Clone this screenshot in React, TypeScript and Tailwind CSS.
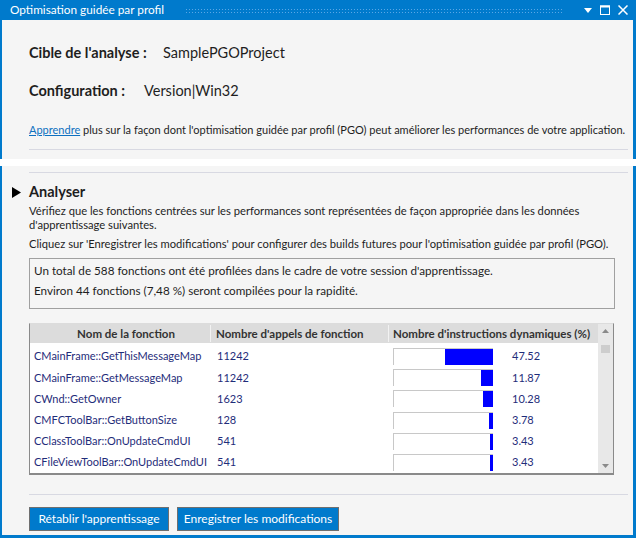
import React from "react";

type Row = { name: string; calls: string; pct: number };

const ROWS: Row[] = [
  { name: "CMainFrame::GetThisMessageMap", calls: "11242", pct: 47.52 },
  { name: "CMainFrame::GetMessageMap", calls: "11242", pct: 11.87 },
  { name: "CWnd::GetOwner", calls: "1623", pct: 10.28 },
  { name: "CMFCToolBar::GetButtonSize", calls: "128", pct: 3.78 },
  { name: "CClassToolBar::OnUpdateCmdUI", calls: "541", pct: 3.43 },
  { name: "CFileViewToolBar::OnUpdateCmdUI", calls: "541", pct: 3.43 },
];

function TitleBar() {
  return (
    <div className="h-[20px] flex items-center text-white pl-[8px] pr-[5px]">
      <span className="w-[175px] text-[11.8px] leading-none whitespace-nowrap">Optimisation guidée par profil</span>
      <div className="w-[377px] h-[5px] bg-[radial-gradient(circle,#5aa7e6_0.8px,transparent_1px)] bg-[length:3px_3px]" />
      {/* window buttons */}
      <div className="ml-auto flex items-center gap-[8px]">
        <svg width="8" height="5" viewBox="0 0 8 5">
          <path d="M0 0 H8 L4 5 Z" fill="white" />
        </svg>
        <svg width="10" height="10" viewBox="0 0 10 10">
          <rect x="0.5" y="1" width="9" height="8.5" fill="none" stroke="white" strokeWidth="1" />
          <rect x="0" y="0.5" width="10" height="2" fill="white" />
        </svg>
        <svg width="10" height="10" viewBox="0 0 10 10">
          <path d="M0.5 0.5 L9.5 9.5 M9.5 0.5 L0.5 9.5" stroke="white" strokeWidth="1.5" />
        </svg>
      </div>
    </div>
  );
}

export default function App() {
  return (
    <div className="w-[636px] h-[538px] flex flex-col bg-white font-['Lato','Liberation_Sans',sans-serif] text-[11.2px] text-[#1e1e1e]">
      {/* top panel */}
      <div className="h-[159px] flex flex-col bg-[#007acc] pl-[2px] pr-[3px]">
        <TitleBar />
        <div className="flex-1 bg-[#f5f5f5] pl-[27px] pr-[5px] flex flex-col">
          <div className="mt-[23px] h-[20px] flex items-center text-[14.5px]">
            <span className="font-bold w-[134px]">Cible de l'analyse :</span>
            <span>SamplePGOProject</span>
          </div>
          <div className="mt-[18px] h-[20px] flex items-center text-[14.5px]">
            <span className="font-bold w-[115px]">Configuration :</span>
            <span>Version|Win32</span>
          </div>
          <p className="mt-[21px] leading-[16px] whitespace-nowrap text-[11px]">
            <a className="text-[#0e70c0] underline">Apprendre</a> plus sur la façon dont l'optimisation guidée par profil (PGO) peut améliorer les performances de votre application.
          </p>
          <div className="mt-[11px] border-t border-[#d8d9e2]" />
        </div>
      </div>

      <div className="h-[7px] bg-white" />

      {/* bottom panel */}
      <div className="flex-1 flex flex-col bg-[#007acc] pl-[2px] pr-[3px] pb-[3px]">
        <div className="flex-1 bg-[#f5f5f5] pl-[27px] pr-[5px] flex flex-col">
          <div className="mt-[6px] border-t border-[#d8d9e2]" />
          <div className="mt-[10px] h-[18px] flex items-center relative">
            <svg className="absolute left-[-17px]" width="9" height="11" viewBox="0 0 9 11">
              <path d="M0 0 L9 5.5 L0 11 Z" fill="black" />
            </svg>
            <span className="font-bold text-[14.5px]">Analyser</span>
          </div>
          <p className="mt-[3px] leading-[14px] w-[565px]">
            Vérifiez que les fonctions centrées sur les performances sont représentées de façon appropriée dans les données d'apprentissage suivantes.
          </p>
          <p className="mt-[5px] leading-[14px] whitespace-nowrap">
            Cliquez sur 'Enregistrer les modifications' pour configurer des builds futures pour l'optimisation guidée par profil (PGO).
          </p>

          <div className="mt-[7px] w-[586px] h-[51px] border border-[#a0a0a0] pt-[1px] pl-[4px] leading-[20px] text-[11.7px]">
            <div>Un total de 588 fonctions ont été profilées dans le cadre de votre session d'apprentissage.</div>
            <div>Environ 44 fonctions (7,48 %) seront compilées pour la rapidité.</div>
          </div>

          {/* table */}
          <div className="mt-[14px] w-[585px] h-[152px] flex border border-[#8a8a8a] border-t-[#dcdcdc] border-b-2 bg-white">
            <div className="flex-1 flex flex-col overflow-hidden">
              <div className="h-[19px] shrink-0 flex items-center bg-[#dcdcdc] font-bold text-[11.5px] text-[#333]">
                <div className="w-[181px] pl-[12px] text-center border-r border-[#f2f2f2]">Nom de la fonction</div>
                <div className="w-[178px] pl-[5px] border-r border-[#f2f2f2] whitespace-nowrap">Nombre d'appels de fonction</div>
                <div className="flex-1 pl-[4px] whitespace-nowrap">Nombre d'instructions dynamiques (%)</div>
              </div>
              <div className="pt-[3px] text-[11px] text-[#1f2d7a]">
                {ROWS.map((r) => (
                  <div key={r.name} className="h-[21.2px] flex items-center">
                    <div className="w-[181px] pl-[4px] whitespace-nowrap">{r.name}</div>
                    <div className="w-[178px] pl-[6px]">{r.calls}</div>
                    <div className="flex-1 pl-[4px] flex items-center">
                      <div className="w-[100px] h-[17px] bg-white border-t border-l border-[#c8c8c8] flex justify-end">
                        <div className="h-full bg-[#0000ff]" style={{ width: Math.round(r.pct) }} />
                      </div>
                      <span className="ml-[19px]">{r.pct.toFixed(2)}</span>
                    </div>
                  </div>
                ))}
              </div>
            </div>
            {/* scrollbar */}
            <div className="w-[15px] bg-[#e8e8e8] flex flex-col items-center">
              <svg className="mt-[5px]" width="7" height="4" viewBox="0 0 7 4">
                <path d="M0 4 L3.5 0 L7 4 Z" fill="#8a8a8a" />
              </svg>
              <div className="mt-[12px] w-[9px] h-[8px] bg-[#cdcdcd]" />
              <svg className="mt-auto mb-[5px]" width="7" height="4" viewBox="0 0 7 4">
                <path d="M0 0 L7 0 L3.5 4 Z" fill="#8a8a8a" />
              </svg>
            </div>
          </div>

          <div className="mt-[19px] border-t border-[#d8d9e2]" />
          <div className="mt-[12px] flex gap-[8px] text-[12px]">
            <button className="w-[140px] h-[24px] bg-[#007acc] border border-[#6f6f6f] text-white whitespace-nowrap">Rétablir l'apprentissage</button>
            <button className="w-[162px] h-[24px] bg-[#007acc] border border-[#6f6f6f] text-white whitespace-nowrap">Enregistrer les modifications</button>
          </div>
        </div>
      </div>
    </div>
  );
}
